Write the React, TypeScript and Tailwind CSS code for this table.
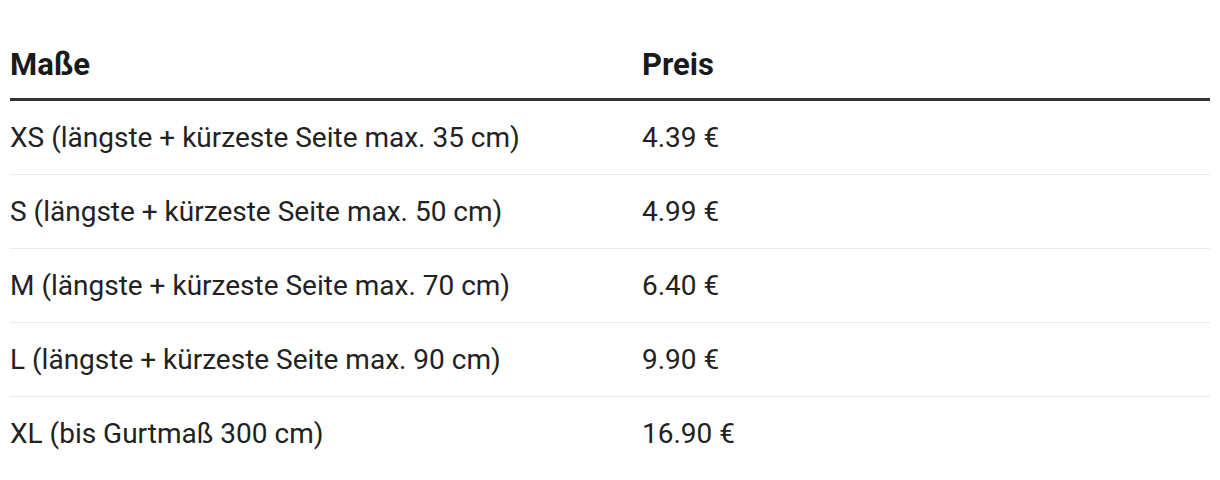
const rows = [
  { size: 'XS (längste + kürzeste Seite max. 35 cm)', price: '4.39 €' },
  { size: 'S (längste + kürzeste Seite max. 50 cm)', price: '4.99 €' },
  { size: 'M (längste + kürzeste Seite max. 70 cm)', price: '6.40 €' },
  { size: 'L (längste + kürzeste Seite max. 90 cm)', price: '9.90 €' },
  { size: 'XL (bis Gurtmaß 300 cm)', price: '16.90 €' },
];

export default function App() {
  return (
    <div className="min-h-screen bg-white px-[10px] pt-[30px] font-['Roboto',sans-serif] text-[#222222]">
      {/* Header */}
      <div className="flex h-[71px] items-center border-b-[3px] border-[#333333] text-[31px] font-bold leading-none text-[#1a1a1a]">
        <div className="w-[632px] shrink-0">Maße</div>
        <div>Preis</div>
      </div>

      {/* Rows */}
      {rows.map((row, i) => (
        <div
          key={row.size}
          className={`flex h-[74px] items-center text-[28px] leading-none ${i < rows.length - 1 ? 'border-b border-[#ebebeb]' : ''}`}
        >
          <div className="w-[632px] shrink-0">{row.size}</div>
          <div>{row.price}</div>
        </div>
      ))}
    </div>
  );
}
